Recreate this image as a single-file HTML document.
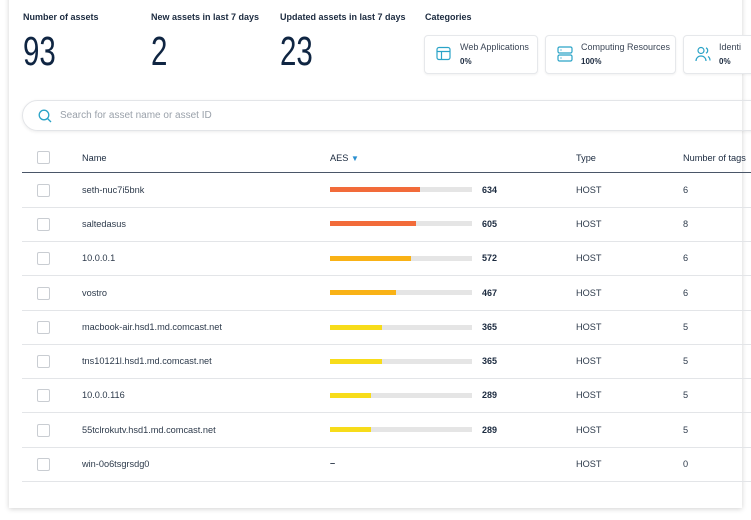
<!DOCTYPE html>
<html><head><style>
*{box-sizing:border-box;margin:0;padding:0}
body{width:751px;height:520px;background:#fff;font-family:"Liberation Sans",sans-serif;color:#1b2a3f;position:relative;overflow:hidden}
.card{position:absolute;left:9px;top:-10px;width:733px;height:518px;background:#fff;box-shadow:0 1px 5px rgba(0,0,0,.18)}
.abs{position:absolute;white-space:nowrap}
.lbl{font-size:9px;font-weight:bold;color:#1b2a3f}
.big{font-size:36px;color:#0f2542;transform:scale(0.82,1.12);transform-origin:top left;font-weight:normal}
.cat{position:absolute;top:35px;height:39px;border:1px solid #e6e8eb;border-radius:4px;background:#fff;box-shadow:0 1px 2px rgba(0,0,0,.06)}
.cat .t{position:absolute;left:35px;top:6px;font-size:9px;color:#3b4656;white-space:nowrap}
.cat .p{position:absolute;left:35px;top:21px;font-size:8px;font-weight:bold;color:#1b2a3f}
.cat svg{position:absolute;left:11px;top:10px}
.search{position:absolute;left:22px;top:100px;width:760px;height:31px;border:1px solid #e3e5e8;border-radius:16px;box-shadow:0 1px 3px rgba(0,0,0,.08)}
.search span{position:absolute;left:37px;top:9px;font-size:10px;color:#9aa1aa}
.cb{position:absolute;left:37px;width:13px;height:13px;border:1px solid #c9cdd2;border-radius:2px;background:#fff}
.row{position:absolute;left:22px;width:729px;height:1px;background:#e3e5e8}
.tx{position:absolute;font-size:9.2px;color:#2d3a4b;white-space:nowrap}
.num{position:absolute;left:482px;font-size:9px;font-weight:bold;color:#1b2a3f}
.bar{position:absolute;left:330px;width:142px;height:5px;background:#e5e5e5}
.bar i{position:absolute;left:0;top:0;height:5px}
</style></head><body>
<div class="card"></div>
<div class="abs lbl" style="left:23px;top:12px">Number of assets</div>
<div class="abs lbl" style="left:151px;top:12px">New assets in last 7 days</div>
<div class="abs lbl" style="left:280px;top:12px">Updated assets in last 7 days</div>
<div class="abs lbl" style="left:425px;top:12px">Categories</div>
<div class="abs big" style="left:23px;top:28px">93</div>
<div class="abs big" style="left:151px;top:28px">2</div>
<div class="abs big" style="left:280px;top:28px">23</div>

<div class="cat" style="left:424px;width:114px">
<svg width="15" height="15" viewBox="0 0 15 15" fill="none" stroke="#2aa3c7" stroke-width="1.2"><rect x="1" y="1.5" width="13" height="12" rx="2"/><path d="M1 5.5h13M5.5 5.5v8"/></svg>
<div class="t">Web Applications</div><div class="p">0%</div></div>
<div class="cat" style="left:545px;width:131px">
<svg width="16" height="16" viewBox="0 0 16 16" fill="none" stroke="#2aa3c7" stroke-width="1.2"><rect x="1" y="1" width="14" height="6" rx="1.5"/><rect x="1" y="9" width="14" height="6" rx="1.5"/><path d="M3.5 4h1M3.5 12h1"/></svg>
<div class="t">Computing Resources</div><div class="p">100%</div></div>
<div class="cat" style="left:683px;width:90px">
<svg width="16" height="16" viewBox="0 0 16 16" fill="none" stroke="#2aa3c7" stroke-width="1.2"><circle cx="6" cy="4.5" r="3"/><path d="M1 15c0-3 2.2-5 5-5s5 2 5 5M11 1.8a3 3 0 0 1 0 5.4M13 10.5c1.3.8 2 2.3 2 4"/></svg>
<div class="t">Identi</div><div class="p">0%</div></div>

<div class="search"><svg class="abs" style="left:15px;top:8px" width="14" height="14" viewBox="0 0 14 14" fill="none" stroke="#2aa3c7" stroke-width="1.3"><circle cx="6" cy="6" r="4.8"/><path d="M9.5 9.5l3.5 3.5"/></svg><span>Search for asset name or asset ID</span></div>

<div class="cb" style="top:151px"></div>
<div class="tx" style="left:82px;top:153px;color:#1b2a3f">Name</div>
<div class="tx" style="left:330px;top:153px;color:#1b2a3f">AES <span style="color:#2a8fd0;font-size:8px">&#9660;</span></div>
<div class="tx" style="left:576px;top:153px;color:#1b2a3f">Type</div>
<div class="tx" style="left:683px;top:153px;color:#1b2a3f">Number of tags</div>
<div class="row" style="top:172px;background:#4a5668"></div>

<div class="cb" style="top:184px"></div><div class="tx" style="left:82px;top:185px">seth-nuc7i5bnk</div><div class="bar" style="top:187px"><i style="width:90px;background:#f26b3a"></i></div><div class="num" style="top:185px">634</div><div class="tx" style="left:576px;top:185px">HOST</div><div class="tx" style="left:683px;top:185px">6</div><div class="row" style="top:207px"></div>
<div class="cb" style="top:218px"></div><div class="tx" style="left:82px;top:219px">saltedasus</div><div class="bar" style="top:221px"><i style="width:86px;background:#f26b3a"></i></div><div class="num" style="top:219px">605</div><div class="tx" style="left:576px;top:219px">HOST</div><div class="tx" style="left:683px;top:219px">8</div><div class="row" style="top:241px"></div>
<div class="cb" style="top:252px"></div><div class="tx" style="left:82px;top:253px">10.0.0.1</div><div class="bar" style="top:256px"><i style="width:81px;background:#f9b216"></i></div><div class="num" style="top:253px">572</div><div class="tx" style="left:576px;top:253px">HOST</div><div class="tx" style="left:683px;top:253px">6</div><div class="row" style="top:275px"></div>
<div class="cb" style="top:287px"></div><div class="tx" style="left:82px;top:288px">vostro</div><div class="bar" style="top:290px"><i style="width:66px;background:#f9b216"></i></div><div class="num" style="top:288px">467</div><div class="tx" style="left:576px;top:288px">HOST</div><div class="tx" style="left:683px;top:288px">6</div><div class="row" style="top:310px"></div>
<div class="cb" style="top:321px"></div><div class="tx" style="left:82px;top:322px">macbook-air.hsd1.md.comcast.net</div><div class="bar" style="top:325px"><i style="width:52px;background:#f7dc1a"></i></div><div class="num" style="top:322px">365</div><div class="tx" style="left:576px;top:322px">HOST</div><div class="tx" style="left:683px;top:322px">5</div><div class="row" style="top:344px"></div>
<div class="cb" style="top:355px"></div><div class="tx" style="left:82px;top:356px">tns10121l.hsd1.md.comcast.net</div><div class="bar" style="top:359px"><i style="width:52px;background:#f7dc1a"></i></div><div class="num" style="top:356px">365</div><div class="tx" style="left:576px;top:356px">HOST</div><div class="tx" style="left:683px;top:356px">5</div><div class="row" style="top:378px"></div>
<div class="cb" style="top:389px"></div><div class="tx" style="left:82px;top:390px">10.0.0.116</div><div class="bar" style="top:393px"><i style="width:41px;background:#f7dc1a"></i></div><div class="num" style="top:390px">289</div><div class="tx" style="left:576px;top:390px">HOST</div><div class="tx" style="left:683px;top:390px">5</div><div class="row" style="top:412px"></div>
<div class="cb" style="top:424px"></div><div class="tx" style="left:82px;top:425px">55tclrokutv.hsd1.md.comcast.net</div><div class="bar" style="top:427px"><i style="width:41px;background:#f7dc1a"></i></div><div class="num" style="top:425px">289</div><div class="tx" style="left:576px;top:425px">HOST</div><div class="tx" style="left:683px;top:425px">5</div><div class="row" style="top:447px"></div>
<div class="cb" style="top:458px"></div><div class="tx" style="left:82px;top:459px">win-0o6tsgrsdg0</div><div class="tx" style="left:330px;top:458px;font-weight:bold">–</div><div class="tx" style="left:576px;top:459px">HOST</div><div class="tx" style="left:683px;top:459px">0</div><div class="row" style="top:481px"></div>
</body></html>
